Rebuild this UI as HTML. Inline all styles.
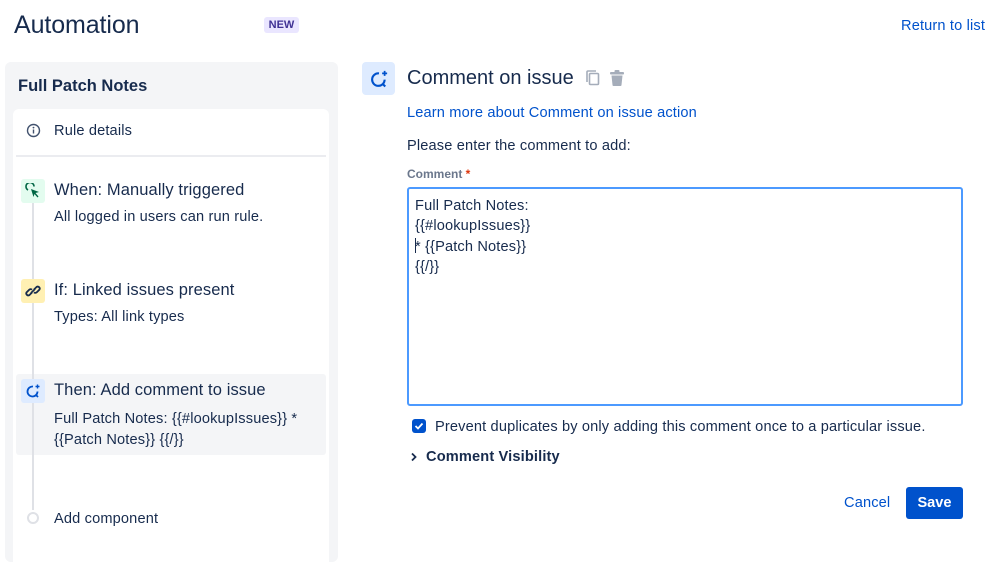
<!DOCTYPE html>
<html><head><style>
*{margin:0;padding:0;box-sizing:border-box}
body{width:999px;height:538px;overflow:hidden;background:#fff;font-family:"Liberation Sans",sans-serif;color:#172b4d;position:relative}
.a{position:absolute;white-space:nowrap}
.t{font-size:14.6px;letter-spacing:0.15px;margin-top:1px}
.ic{position:absolute;width:24px;height:24px;border-radius:3px;display:flex;align-items:center;justify-content:center}
</style></head><body>
<div class="a" style="left:14px;top:11px;font-size:25px;font-weight:500;letter-spacing:-0.1px">Automation</div>
<div class="a" style="left:264px;top:17px;width:35px;height:16px;background:#eae6ff;color:#403294;font-size:11px;font-weight:bold;text-align:center;line-height:16px;border-radius:3px">NEW</div>
<div class="a t" style="left:901px;top:17px;color:#0052cc;font-weight:500">Return to list</div>

<div class="a" style="left:5px;top:62px;width:333px;height:500px;background:#f4f5f7;border-radius:6px"></div>
<div class="a" style="left:18px;top:77px;font-size:16.5px;font-weight:bold">Full Patch Notes</div>
<div class="a" style="left:13px;top:109px;width:316px;height:460px;background:#fff;border-radius:6px"></div>
<svg class="a" style="left:26px;top:123px" width="15" height="15" viewBox="0 0 15 15"><circle cx="7.5" cy="7.5" r="6" fill="none" stroke="#42526e" stroke-width="1.4"/><rect x="6.8" y="6.5" width="1.4" height="4" fill="#42526e"/><circle cx="7.5" cy="4.6" r="0.9" fill="#42526e"/></svg>
<div class="a t" style="left:54px;top:122px">Rule details</div>
<div class="a" style="left:16px;top:155px;width:310px;height:2px;background:#ebecf0"></div>

<div class="a" style="left:16px;top:374px;width:310px;height:81px;background:#f4f5f7;border-radius:3px"></div>
<div class="a" style="left:32px;top:190px;width:2px;height:320px;background:#dfe1e6"></div>

<div class="ic" style="left:21px;top:179px;background:#e3fcef"><svg width="16" height="16" viewBox="0 0 16 16"><path d="M6 6 L14 9 L10.5 10 L13.5 13.5 L12.5 14.5 L9.5 11 L8.5 14 Z" fill="#006644"/><path d="M3 7 A4 4 0 1 1 9 3.5" fill="none" stroke="#006644" stroke-width="1.6"/></svg></div>
<div class="a" style="left:54px;top:181px;font-size:16.5px;letter-spacing:0.1px">When: Manually triggered</div>
<div class="a t" style="left:54px;top:208px">All logged in users can run rule.</div>

<div class="ic" style="left:21px;top:279px;background:#fff0b3"><svg width="16" height="16" viewBox="0 0 16 16" fill="none" stroke="#172b4d" stroke-width="1.8"><path d="M7 9.5 L4.5 12 a2 2 0 0 1 -2.8 -2.8 L4.2 6.7 a2 2 0 0 1 2.8 0"/><path d="M9 6.5 L11.5 4 a2 2 0 0 1 2.8 2.8 L11.8 9.3 a2 2 0 0 1 -2.8 0"/><path d="M6 10 L10 6"/></svg></div>
<div class="a" style="left:54px;top:281px;font-size:16.5px;letter-spacing:0.1px">If: Linked issues present</div>
<div class="a t" style="left:54px;top:308px">Types: All link types</div>

<div class="ic" style="left:21px;top:379px;background:#deebff"><svg width="16" height="16" viewBox="0 0 16 16" fill="none" stroke="#0052cc" stroke-width="1.8"><path d="M12.5 8.5 A5 5 0 1 1 8 3.5"/><path d="M11 12 L13 14"/><path d="M12.5 1.5v4M10.5 3.5h4" stroke-width="1.4"/></svg></div>
<div class="a" style="left:54px;top:381px;font-size:16.5px;letter-spacing:0.1px">Then: Add comment to issue</div>
<div class="a t" style="left:54px;top:410px">Full Patch Notes: {{#lookupIssues}} *</div>
<div class="a t" style="left:54px;top:431px">{{Patch Notes}} {{/}}</div>

<div class="a" style="left:27px;top:512px;width:12px;height:12px;border:2px solid #dfe1e6;border-radius:50%;background:#fff"></div>
<div class="a t" style="left:54px;top:510px">Add component</div>

<div class="ic" style="left:362px;top:62px;width:33px;height:33px;background:#deebff;border-radius:4px"><svg width="20" height="20" viewBox="0 0 16 16" fill="none" stroke="#0052cc" stroke-width="1.7"><path d="M12.5 8.5 A5 5 0 1 1 8 3.5"/><path d="M11 12 L13 14"/><path d="M12.5 1.5v4M10.5 3.5h4" stroke-width="1.4"/></svg></div>
<div class="a" style="left:407px;top:67px;font-size:20px;font-weight:500">Comment on issue</div>
<svg class="a" style="left:585px;top:69px" width="16" height="18" viewBox="0 0 16 18"><rect x="4.5" y="4.5" width="9" height="11" rx="1" fill="none" stroke="#a5adba" stroke-width="1.6"/><path d="M2 13V3a1 1 0 0 1 1-1h8" fill="none" stroke="#a5adba" stroke-width="1.6"/></svg>
<svg class="a" style="left:608px;top:69px" width="18" height="18" viewBox="0 0 18 18"><rect x="2" y="3" width="14" height="2.5" rx="1" fill="#a5adba"/><rect x="6.5" y="1" width="5" height="2.5" rx="1" fill="#a5adba"/><path d="M3.5 6.5h11l-1 9.5a1 1 0 0 1 -1 1h-7a1 1 0 0 1 -1 -1z" fill="#a5adba"/></svg>
<div class="a t" style="left:407px;top:104px;color:#0052cc">Learn more about Comment on issue action</div>
<div class="a t" style="left:407px;top:137px">Please enter the comment to add:</div>
<div class="a" style="left:407px;top:167px;font-size:12px;font-weight:bold;color:#6b778c">Comment <span style="color:#de350b">*</span></div>
<div class="a" style="left:407px;top:187px;width:556px;height:219px;border:2px solid #4c9aff;border-radius:3px"></div>
<div class="a t" style="left:415px;top:195px;line-height:20.3px">Full Patch Notes:<br>{{#lookupIssues}}<br>* {{Patch Notes}}<br>{{/}}</div>
<div class="a" style="left:415px;top:238px;width:1px;height:15px;background:#172b4d"></div>
<div class="a" style="left:412px;top:419px;width:14px;height:14px;background:#0052cc;border-radius:3px"><svg width="14" height="14" viewBox="0 0 14 14"><path d="M3.5 7 L6 9.5 L10.5 4.5" fill="none" stroke="#fff" stroke-width="1.8"/></svg></div>
<div class="a t" style="left:435px;top:418px">Prevent duplicates by only adding this comment once to a particular issue.</div>
<svg class="a" style="left:410px;top:452px" width="8" height="10" viewBox="0 0 8 10"><path d="M2 1.5 L5.5 5 L2 8.5" fill="none" stroke="#172b4d" stroke-width="1.8"/></svg>
<div class="a t" style="left:426px;top:448px;font-weight:bold">Comment Visibility</div>
<div class="a t" style="left:844px;top:494px;color:#0052cc;font-weight:500">Cancel</div>
<div class="a" style="left:906px;top:487px;width:57px;height:32px;background:#0052cc;border-radius:3px;color:#fff;font-size:14.6px;font-weight:bold;text-align:center;line-height:32px">Save</div>
</body></html>
